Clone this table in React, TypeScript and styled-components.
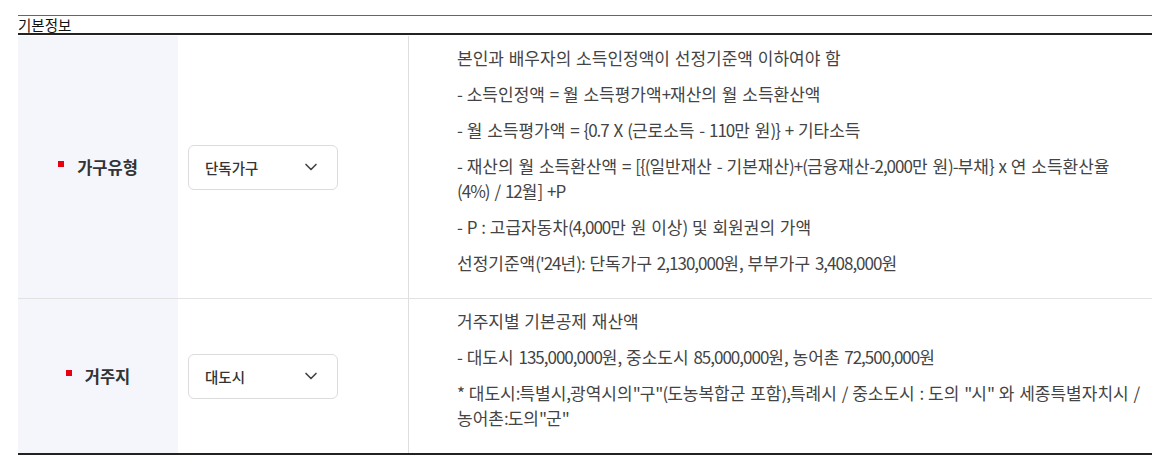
import React from 'react';
import styled, { createGlobalStyle } from 'styled-components';
import { ChevronDown } from 'lucide-react';

const GlobalStyle = createGlobalStyle`
  html, body { margin: 0; padding: 0; background: #fff; }
  body {
    font-family: "Noto Sans CJK KR", "Noto Sans", sans-serif;
  }
  * { box-sizing: border-box; }
`;

const Page = styled.div`
  padding: 15px 13px 0 18px;
`;

const Title = styled.h2`
  margin: 0 0 1px;
  height: 20px;
  border-top: 1px solid #666;
  border-bottom: 2px solid #222;
  font-size: 14.5px;
  font-weight: 400;
  line-height: 17px;
  color: #111;
`;

const Table = styled.div`
  border-bottom: 2px solid #222;
`;

const Row = styled.div`
  display: grid;
  grid-template-columns: 160px 231px 1fr;
  border-bottom: 1px solid #e2e2e2;
  &:last-child {
    border-bottom: none;
  }
`;

const LabelCell = styled.div`
  background: #f4f6fb;
  display: flex;
  align-items: center;
  justify-content: center;
  gap: 13px;
  font-size: 16.5px;
  font-weight: 700;
  color: #333;
`;

const RequiredMark = styled.span`
  width: 6px;
  height: 6px;
  background: #e60012;
  margin-bottom: 7px;
`;

const SelectCell = styled.div`
  display: flex;
  align-items: center;
  padding: 0 10px;
  border-right: 1px solid #dedede;
`;

const SelectBox = styled.button`
  width: 150px;
  height: 45px;
  display: flex;
  align-items: center;
  justify-content: space-between;
  padding: 0 16px 0 16px;
  border: 1px solid #dcdcdc;
  border-radius: 6px;
  background: #fff;
  font-family: inherit;
  font-size: 14.5px;
  font-weight: 500;
  color: #333;
  cursor: pointer;
`;

const ContentCell = styled.div`
  padding: 9px 8px 12px 48px;
  font-size: 17px;
  line-height: 25px;
  color: #444;
  word-break: keep-all;
  word-spacing: 1px;
`;

const Para = styled.p`
  margin: 0 0 11px;
`;

/* Latin digits and punctuation are set tighter, as in the original face */
const Latin = styled.span`
  letter-spacing: -1px;
`;

const NON_HANGUL = /([^\uAC00-\uD7A3\s]+)/;

function renderText(text: string) {
  return text.split(NON_HANGUL).map((part, i) =>
    i % 2 === 1 ? <Latin key={i}>{part}</Latin> : part
  );
}

type RowData = { label: string; value: string; lines: string[] };

const rows: RowData[] = [
  {
    label: '가구유형',
    value: '단독가구',
    lines: [
      '본인과 배우자의 소득인정액이 선정기준액 이하여야 함',
      '- 소득인정액 = 월 소득평가액+재산의 월 소득환산액',
      '- 월 소득평가액 = {0.7 X (근로소득 - 110만 원)} + 기타소득',
      '- 재산의 월 소득환산액 = [{(일반재산 - 기본재산)+(금융재산-2,000만 원)-부채} x 연 소득환산율 (4%) / 12월] +P',
      '- P : 고급자동차(4,000만 원 이상) 및 회원권의 가액',
      "선정기준액('24년): 단독가구 2,130,000원, 부부가구 3,408,000원",
    ],
  },
  {
    label: '거주지',
    value: '대도시',
    lines: [
      '거주지별 기본공제 재산액',
      '- 대도시 135,000,000원, 중소도시 85,000,000원, 농어촌 72,500,000원',
      '* 대도시:특별시,광역시의"구"(도농복합군 포함),특례시 / 중소도시 : 도의 "시" 와 세종특별자치시 / 농어촌:도의"군"',
    ],
  },
];

export default function App() {
  return (
    <>
      <GlobalStyle />
      <Page>
        <Title>기본정보</Title>
        <Table>
          {rows.map((r) => (
            <Row key={r.label}>
              <LabelCell>
                <RequiredMark />
                {r.label}
              </LabelCell>
              <SelectCell>
                <SelectBox type="button">
                  {r.value}
                  <ChevronDown size={20} strokeWidth={2} color="#444" />
                </SelectBox>
              </SelectCell>
              <ContentCell>
                {r.lines.map((l, i) => (
                  <Para key={i}>{renderText(l)}</Para>
                ))}
              </ContentCell>
            </Row>
          ))}
        </Table>
      </Page>
    </>
  );
}
